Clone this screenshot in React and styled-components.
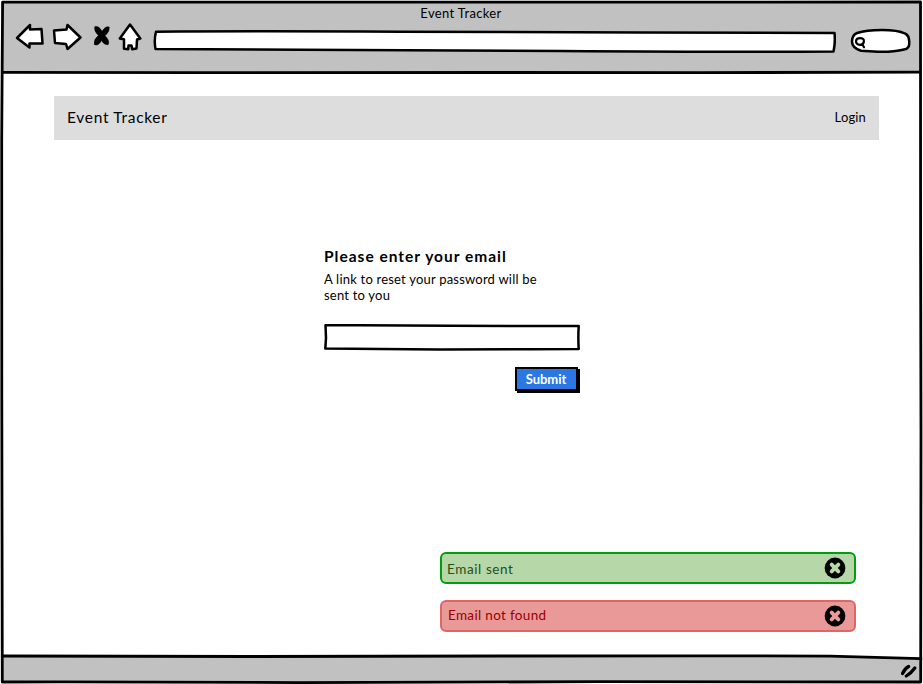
import React from "react";
import styled, { createGlobalStyle } from "styled-components";

const GlobalStyle = createGlobalStyle`
  * { box-sizing: border-box; }
  body { margin: 0; background: #fff; font-family: Lato, "Noto Sans", sans-serif; color: #000; }
  h1, h2, p { margin: 0; font-weight: 400; }
`;

const Window = styled.div`
  position: relative;
  display: flex;
  flex-direction: column;
  width: 923px;
  height: 684px;
  overflow: hidden;
  background: #fff;
`;

const Outline = styled.svg`
  position: absolute;
  inset: 0;
  pointer-events: none;
  fill: none;
  stroke: #000;
  stroke-width: 2.8;
  stroke-linecap: round;
  stroke-linejoin: round;
`;

const Chrome = styled.header`
  flex: none;
  height: 71px;
  margin: 2px 3px 0;
  background: #c1c1c1;
`;

const Label = styled.span`
  display: block;
  white-space: nowrap;
  font-size: ${(p) => p.$size || 13}px;
  font-weight: ${(p) => (p.$bold ? 700 : 400)};
  letter-spacing: ${(p) => p.$track || 0}px;
  line-height: ${(p) => p.$line || 16}px;
  padding-top: ${(p) => p.$drop || 0}px;
  padding-bottom: ${(p) => p.$lift || 0}px;
  color: ${(p) => p.$color || "#000"};
`;

const TitleRow = styled.div`
  display: flex;
  justify-content: center;
  padding: 3px 1px 0 0;
  height: 20px;
`;

const Tools = styled.div`
  display: flex;
  align-items: flex-start;
  padding-left: 12px;
`;

const NavIcons = styled.svg`
  flex: none;
  width: 130px;
  height: 32px;
  fill: #fff;
  stroke: #000;
  stroke-width: 2.5;
  stroke-linejoin: round;
  stroke-linecap: round;
`;

const Address = styled.div`
  flex: none;
  width: 684px;
  height: 24px;
  margin: 8px 0 0 7px;
`;

const Search = styled.div`
  flex: none;
  width: 62px;
  height: 28px;
  margin: 6px 0 0 13px;
`;

const Drawn = styled.svg`
  display: block;
  width: 100%;
  height: 100%;
  fill: #fff;
  stroke: #000;
  stroke-width: 2.5;
  stroke-linejoin: round;
  stroke-linecap: round;
`;

const Page = styled.main`
  flex: 1;
  display: flex;
  flex-direction: column;
  padding: 23px 44px 0 54px;
`;

const NavBar = styled.nav`
  flex: none;
  display: flex;
  align-items: center;
  justify-content: space-between;
  height: 44px;
  padding: 0 13px;
  background: #ddd;
`;

const ResetForm = styled.section`
  display: flex;
  flex-direction: column;
  width: 256px;
  margin: 106px 0 0 270px;
`;

const Hint = styled.div`
  margin-top: 5px;
`;

const Field = styled.div`
  width: 256px;
  height: 28px;
  margin-top: 20px;
`;

const SubmitButton = styled.button`
  align-self: flex-end;
  display: flex;
  align-items: center;
  justify-content: center;
  width: 63px;
  height: 24px;
  margin: 16px 2px 0 0;
  padding: 0 1px 0 0;
  border: 2px solid #000;
  background: #2b78e4;
  box-shadow: 2px 2px 0 #000;
  font-family: inherit;
`;

const Toasts = styled.div`
  display: flex;
  flex-direction: column;
  gap: 16px;
  align-self: flex-end;
  width: 416px;
  margin: 161px 23px 0 0;
`;

const Toast = styled.div`
  display: flex;
  align-items: center;
  justify-content: space-between;
  height: 32px;
  padding: 0 8px 0 ${(p) => (p.$error ? 6 : 5)}px;
  border: 2px solid ${(p) => (p.$error ? "#e06666" : "#009e0f")};
  border-radius: 6px;
  background: ${(p) => (p.$error ? "#ea9999" : "#b6d7a8")};
`;

const Close = styled.svg`
  width: 22px;
  height: 22px;
`;

const StatusBar = styled.footer`
  flex: none;
  display: flex;
  justify-content: flex-end;
  height: 27px;
  margin: 0 3px 1px;
  background: #c1c1c1;
  clip-path: polygon(0 0, 89% 0, 100% 2px, 100% 100%, 0 100%);
`;

const Grip = styled.svg`
  width: 18px;
  height: 16px;
  margin: 8px 1px 0 0;
`;

function CloseIcon({ color }) {
  return (
    <Close viewBox="0 0 22 22">
      <circle cx="11" cy="11" r="10.4" fill="#000" />
      <path d="M7.7 7.7 14.3 14.3M14.3 7.7 7.7 14.3" stroke={color} strokeWidth="4" strokeLinecap="round" />
    </Close>
  );
}

export default function App() {
  return (
    <Window>
      <GlobalStyle />
      <Chrome>
        <TitleRow><Label $track={0.35}>Event Tracker</Label></TitleRow>
        <Tools>
          <NavIcons viewBox="15 22 130 32">
            <path d="M17 38 30 25 30 29.5 41.5 29 42.5 43.5 29.5 43.5 29.5 47.5Z" />
            <path d="M54 30.5 66.5 29.5 67.5 25 80.5 37.5 67.5 49 66 44 55 43Z" />
            <path
              d="M95 26.8Q99 25.5 102 31.5 105.5 25.5 109.2 27 110 31.5 105 35.7 110.3 41 108 44.8 104 45 101.5 40.5 98 46.5 94.3 44.5 93.5 39.5 98.4 35.5 93.3 30 95 26.8Z"
              fill="#000"
              strokeWidth="0.6"
            />
            <path d="M130 24.5 119.8 38.5 124 39.2 124 48.7 128.3 49.2 128.5 45.5 131.5 45.5 132.2 49.2 136.5 48.5 137 39.5 140.3 38.5Z" />
          </NavIcons>
          <Address>
            <Drawn viewBox="152 30 684 24">
              <path d="M156 31.7Q250 31 400 31.7T640 32.5L834.5 33Q835.5 42 833.5 51.5Q740 52.3 560 51L300 49.7 155.5 49Q153.8 40 156 31.7Z" />
            </Drawn>
          </Address>
          <Search>
            <Drawn viewBox="849 28 62 28">
              <path d="M857 33Q866 30 882 30T905 33.5Q909 35 909.3 42T904 49.5Q893 52.2 878 51.8L861 50.7Q852 48 852 41.5T857 33Z" />
              <path d="M856 41.3Q856.2 38.2 860 38.2 864 38.2 863.9 41.3 863.6 44.8 860 44.8 856.1 44.6 856 41.3M862.4 44.5 864 47.2" fill="none" strokeWidth="2.2" />
            </Drawn>
          </Search>
        </Tools>
      </Chrome>

      <Page>
        <NavBar>
          <Label as="h1" $size={15.5} $track={0.7} $lift={2}>Event Tracker</Label>
          <Label $track={0.15} $lift={2}>Login</Label>
        </NavBar>
        <ResetForm>
          <Label as="h2" $size={15.5} $bold $track={1} $line={20}>Please enter your email</Label>
          <Hint>
            <Label $track={0.21}>A link to reset your password will be</Label>
            <Label $track={0.21}>sent to you</Label>
          </Hint>
          <Field>
            <Drawn viewBox="324 323 256 28">
              <path d="M325.5 325.2 360 325.3 450 325.8 578.7 326Q578 337 578.7 349L530 349.3 440 349.6 380 349 325.3 348.6 326 338Z" />
            </Drawn>
          </Field>
          <SubmitButton><Label $bold $color="#fff">Submit</Label></SubmitButton>
        </ResetForm>
        <Toasts>
          <Toast>
            <Label $size={13.5} $track={0.6} $drop={2} $color="#274e13">Email sent</Label>
            <CloseIcon color="#b6d7a8" />
          </Toast>
          <Toast $error>
            <Label $size={13.5} $track={0.33} $lift={2} $color="#990000">Email not found</Label>
            <CloseIcon color="#ea9999" />
          </Toast>
        </Toasts>
      </Page>

      <StatusBar>
        <Grip viewBox="901 664 18 16">
          <path d="M902.5 673.5Q904.8 668.5 908.6 666.5M906.3 676Q911.3 673 914.8 668" fill="none" stroke="#000" strokeWidth="3.2" strokeLinecap="round" />
        </Grip>
      </StatusBar>

      <Outline viewBox="0 0 923 684">
        <path d="M2.6 2.2 920.5 2 920.6 240 921 430 920.7 682 600 681.7 300 682.6 60 681.8 2.3 682 1.8 400 1.7 140Z" />
        <path d="M3 72.3 200 72.7 500 72.5 700 72.6 920 72.2M3 656 250 656.5 500 656 700 655.8 830 656.1 921 658.7" />
      </Outline>
    </Window>
  );
}
